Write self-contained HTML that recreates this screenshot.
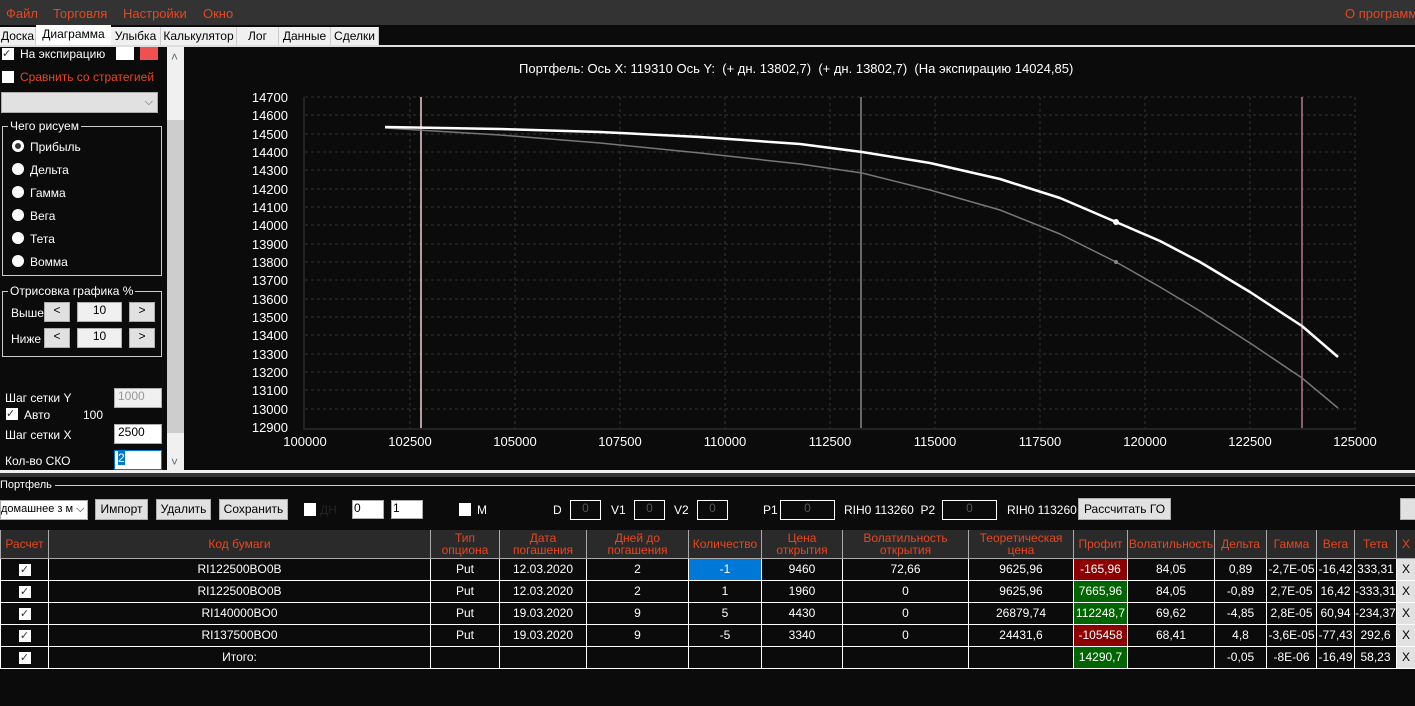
<!DOCTYPE html>
<html><head><meta charset="utf-8"><style>
*{box-sizing:border-box;margin:0;padding:0}
body{width:1415px;height:706px;background:#0b0b0b;font-family:"Liberation Sans",sans-serif;font-size:12px;color:#fff;position:relative;overflow:hidden}
.a{position:absolute}
.menu{left:0;top:0;width:1415px;height:25px;background:#333}
.menu span{position:absolute;top:6px;color:#e8461e;font-size:13px;white-space:nowrap}
.tab{position:absolute;top:27px;height:18px;background:#f0f0f0;color:#000;font-size:12px;padding-top:2px;text-align:center;border-right:1px solid #ccc}
.btn{position:absolute;background:#e1e1e1;border:1px solid #adadad;color:#000;text-align:center;font-size:12px;white-space:nowrap}
.inp{position:absolute;border:1px solid #fff;background:#0b0b0b;color:#555;text-align:center;font-size:12px}
.rad{position:absolute;width:12px;height:12px;border-radius:50%;background:#fff}
.lbl{position:absolute;font-size:12px;color:#fff;white-space:nowrap}
table{position:absolute;left:0;top:530px;border-collapse:collapse;table-layout:fixed;width:1415px}
td{border:1px solid #fff;height:22px;text-align:center;font-size:12px;white-space:nowrap;overflow:hidden}
tr.h td{background:#2a2a2a;color:#e8461e;height:28px;line-height:12px;border-color:#aaa;border-top:none}
.chk{display:inline-block;width:12px;height:12px;background:#fff;color:#333;font-size:11px;line-height:12px;vertical-align:middle}
.red{background:#8b0000}.grn{background:#006400}
</style></head><body>
<div class="a menu"><span style="left:6px">Файл</span><span style="left:53px">Торговля</span><span style="left:123px">Настройки</span><span style="left:203px">Окно</span><span style="left:1345px">О программ</span></div>
<div class="a" style="left:0;top:25px;width:1415px;height:21px;background:#0b0b0b"></div>
<div class="tab" style="left:0;width:36px">Доска</div>
<div class="tab" style="left:36px;width:75px;top:25px;height:21px;background:#fff;border:none">Диаграмма</div>
<div class="tab" style="left:111px;width:50px">Улыбка</div>
<div class="tab" style="left:161px;width:76px">Калькулятор</div>
<div class="tab" style="left:237px;width:42px">Лог</div>
<div class="tab" style="left:279px;width:52px">Данные</div>
<div class="tab" style="left:331px;width:48px">Сделки</div>
<div class="a" style="left:0;top:45px;width:1415px;height:2px;background:#ddd"></div>
<!-- left panel -->
<div class="a" style="left:2px;top:48px;width:12px;height:12px;background:#fff;color:#333;font-size:11px;line-height:12px">✓</div>
<div class="lbl" style="left:20px;top:47px">На экспирацию</div>
<div class="a" style="left:116px;top:47px;width:18px;height:13px;background:#fff"></div>
<div class="a" style="left:140px;top:47px;width:18px;height:13px;background:#f05050"></div>
<div class="a" style="left:2px;top:71px;width:12px;height:12px;background:#fff"></div>
<div class="lbl" style="left:20px;top:70px;color:#e8461e">Сравнить со стратегией</div>
<div class="a" style="left:1px;top:92px;width:157px;height:21px;background:#e1e1e1;border:1px solid #adadad;color:#555;text-align:right;padding-right:4px;font-size:11px;line-height:18px">⌵</div>
<div class="a" style="left:2px;top:126px;width:160px;height:150px;border:1px solid #ccc"></div>
<div class="lbl" style="left:8px;top:119px;background:#0b0b0b;padding:0 2px">Чего рисуем</div>
<div class="rad" style="left:12px;top:140px;border:3px solid #fff;background:#333"></div><div class="lbl" style="left:30px;top:140px">Прибыль</div>
<div class="rad" style="left:12px;top:163px"></div><div class="lbl" style="left:30px;top:163px">Дельта</div>
<div class="rad" style="left:12px;top:186px"></div><div class="lbl" style="left:30px;top:186px">Гамма</div>
<div class="rad" style="left:12px;top:209px"></div><div class="lbl" style="left:30px;top:209px">Вега</div>
<div class="rad" style="left:12px;top:232px"></div><div class="lbl" style="left:30px;top:232px">Тета</div>
<div class="rad" style="left:12px;top:255px"></div><div class="lbl" style="left:30px;top:255px">Вомма</div>
<div class="a" style="left:2px;top:291px;width:160px;height:66px;border:1px solid #ccc"></div>
<div class="lbl" style="left:8px;top:284px;background:#0b0b0b;padding:0 2px">Отрисовка графика %</div>
<div class="lbl" style="left:11px;top:306px">Выше</div>
<div class="btn" style="left:44px;top:302px;width:26px;height:20px">&lt;</div>
<div class="btn" style="left:77px;top:302px;width:45px;height:20px;background:#f0f0f0">10</div>
<div class="btn" style="left:129px;top:302px;width:26px;height:20px">&gt;</div>
<div class="lbl" style="left:11px;top:332px">Ниже</div>
<div class="btn" style="left:44px;top:328px;width:26px;height:20px">&lt;</div>
<div class="btn" style="left:77px;top:328px;width:45px;height:20px;background:#f0f0f0">10</div>
<div class="btn" style="left:129px;top:328px;width:26px;height:20px">&gt;</div>
<div class="lbl" style="left:5px;top:391px">Шаг сетки Y</div>
<div class="btn" style="left:114px;top:388px;width:48px;height:20px;background:#f0f0f0;color:#999;text-align:left;padding-left:3px">1000</div>
<div class="a" style="left:6px;top:408px;width:12px;height:12px;background:#fff;color:#333;font-size:11px;line-height:12px">✓</div>
<div class="lbl" style="left:24px;top:408px">Авто</div><div class="lbl" style="left:83px;top:408px">100</div>
<div class="lbl" style="left:5px;top:428px">Шаг сетки X</div>
<div class="btn" style="left:114px;top:424px;width:48px;height:20px;background:#fff;text-align:left;padding-left:3px">2500</div>
<div class="lbl" style="left:5px;top:454px">Кол-во СКО</div>
<div class="a" style="left:114px;top:450px;width:48px;height:20px;background:#fff;border:1px solid #0078d7;color:#fff;padding-left:3px"><span style="background:#0078d7">2</span></div>
<div class="a" style="left:167px;top:47px;width:17px;height:423px;background:#f0f0f0"></div>
<div class="a" style="left:167px;top:120px;width:17px;height:313px;background:#cdcdcd"></div>
<div class="lbl" style="left:171px;top:50px;color:#666">˄</div>
<div class="lbl" style="left:171px;top:455px;color:#666">˅</div>
<!-- chart -->
<div class="lbl" style="left:519px;top:61px;font-size:13px">Портфель: Ось X: 119310 Ось Y: &nbsp;(+ дн. 13802,7) &nbsp;(+ дн. 13802,7) &nbsp;(На экспирацию 14024,85)</div>
<svg class="a" style="left:0;top:0" width="1415" height="470">
<g stroke="#333" stroke-dasharray="3,3" stroke-width="1">
<line x1="305" y1="97" x2="1355" y2="97"/><line x1="305" y1="115" x2="1355" y2="115"/><line x1="305" y1="134" x2="1355" y2="134"/><line x1="305" y1="152" x2="1355" y2="152"/><line x1="305" y1="170" x2="1355" y2="170"/><line x1="305" y1="189" x2="1355" y2="189"/><line x1="305" y1="207" x2="1355" y2="207"/><line x1="305" y1="225" x2="1355" y2="225"/><line x1="305" y1="244" x2="1355" y2="244"/><line x1="305" y1="262" x2="1355" y2="262"/><line x1="305" y1="280" x2="1355" y2="280"/><line x1="305" y1="299" x2="1355" y2="299"/><line x1="305" y1="317" x2="1355" y2="317"/><line x1="305" y1="335" x2="1355" y2="335"/><line x1="305" y1="354" x2="1355" y2="354"/><line x1="305" y1="372" x2="1355" y2="372"/><line x1="305" y1="390" x2="1355" y2="390"/><line x1="305" y1="409" x2="1355" y2="409"/>
<line x1="410" y1="97" x2="410" y2="428"/><line x1="515" y1="97" x2="515" y2="428"/><line x1="620" y1="97" x2="620" y2="428"/><line x1="725" y1="97" x2="725" y2="428"/><line x1="830" y1="97" x2="830" y2="428"/><line x1="935" y1="97" x2="935" y2="428"/><line x1="1040" y1="97" x2="1040" y2="428"/><line x1="1145" y1="97" x2="1145" y2="428"/><line x1="1250" y1="97" x2="1250" y2="428"/><line x1="1355" y1="97" x2="1355" y2="428"/>
</g>
<line x1="304" y1="97" x2="304" y2="429" stroke="#222" stroke-width="2"/>
<line x1="303" y1="429" x2="1356" y2="429" stroke="#222" stroke-width="2"/>
<line x1="421" y1="97" x2="421" y2="428" stroke="#f0d0d0" stroke-width="1.5"/>
<line x1="861" y1="97" x2="861" y2="428" stroke="#888" stroke-width="1.5"/>
<line x1="1302" y1="97" x2="1302" y2="428" stroke="#b08088" stroke-width="1.5"/>
<polyline points="385,128 500,135 600,143 700,153 800,164 862,173 930,190 1000,210 1060,234 1116,262 1160,287 1200,311 1250,343 1302,378 1338,408" fill="none" stroke="#777" stroke-width="1.5" stroke-linejoin="round"/>
<polyline points="385,127 500,129 600,132 700,137 800,144 862,152 930,163 1000,179 1060,198 1116,222 1160,241 1200,262 1250,292 1302,326 1338,357" fill="none" stroke="#fff" stroke-width="2.5" stroke-linejoin="round"/>
<circle cx="1116" cy="222" r="3" fill="#fff"/><circle cx="1116" cy="262" r="2" fill="#888"/>
<g fill="#fff" font-size="13" font-family="Liberation Sans" text-anchor="end">
<text x="288" y="102">14700</text><text x="288" y="120">14600</text><text x="288" y="139">14500</text><text x="288" y="157">14400</text><text x="288" y="175">14300</text><text x="288" y="194">14200</text><text x="288" y="212">14100</text><text x="288" y="230">14000</text><text x="288" y="249">13900</text><text x="288" y="267">13800</text><text x="288" y="285">13700</text><text x="288" y="304">13600</text><text x="288" y="322">13500</text><text x="288" y="340">13400</text><text x="288" y="359">13300</text><text x="288" y="377">13200</text><text x="288" y="395">13100</text><text x="288" y="414">13000</text><text x="288" y="432">12900</text>
</g>
<g fill="#fff" font-size="13" font-family="Liberation Sans" text-anchor="middle">
<text x="305" y="446">100000</text><text x="515" y="446">105000</text><text x="620" y="446">107500</text><text x="725" y="446">110000</text><text x="830" y="446">112500</text><text x="935" y="446">115000</text><text x="1040" y="446">117500</text><text x="1145" y="446">120000</text><text x="1250" y="446">122500</text><text x="1355" y="446">125000</text><text x="410" y="446">102500</text>
</g>
</svg>
<div class="a" style="left:0;top:470px;width:1415px;height:3px;background:#eee"></div>
<div class="a" style="left:0;top:473px;width:1415px;height:4px;background:#333"></div>
<!-- portfolio -->
<div class="a" style="left:0;top:485px;width:1415px;height:1px;background:#ccc"></div>
<div class="lbl" style="left:0;top:479px;background:#0b0b0b;padding-right:3px;font-size:11px">Портфель</div>
<div class="btn" style="left:0;top:500px;width:88px;height:20px;background:#fff;text-align:left;font-size:11px;line-height:17px;overflow:hidden">домашнее з м ⌵</div>
<div class="btn" style="left:95px;top:499px;width:53px;height:21px;line-height:19px">Импорт</div>
<div class="btn" style="left:156px;top:499px;width:55px;height:21px;line-height:19px">Удалить</div>
<div class="btn" style="left:219px;top:499px;width:69px;height:21px;line-height:19px">Сохранить</div>
<div class="a" style="left:304px;top:503px;width:12px;height:13px;background:#fff"></div>
<div class="lbl" style="left:320px;top:503px;color:#222">ДН</div>
<div class="btn" style="left:352px;top:500px;width:32px;height:19px;background:#fff;text-align:left;padding-left:1px">0</div>
<div class="btn" style="left:391px;top:500px;width:32px;height:19px;background:#fff;text-align:left;padding-left:1px">1</div>
<div class="a" style="left:459px;top:503px;width:12px;height:13px;background:#fff"></div>
<div class="lbl" style="left:477px;top:503px">M</div>
<div class="lbl" style="left:553px;top:503px">D</div><div class="inp" style="left:570px;top:500px;width:31px;height:20px">0</div>
<div class="lbl" style="left:611px;top:503px">V1</div><div class="inp" style="left:634px;top:500px;width:31px;height:20px">0</div>
<div class="lbl" style="left:674px;top:503px">V2</div><div class="inp" style="left:697px;top:500px;width:31px;height:20px">0</div>
<div class="lbl" style="left:763px;top:503px">P1</div><div class="inp" style="left:780px;top:500px;width:55px;height:20px">0</div>
<div class="lbl" style="left:844px;top:503px">RIH0 113260 &nbsp;P2</div><div class="inp" style="left:942px;top:500px;width:55px;height:20px">0</div>
<div class="lbl" style="left:1007px;top:503px">RIH0 113260</div>
<div class="btn" style="left:1078px;top:498px;width:93px;height:22px;line-height:20px">Рассчитать ГО</div>
<div class="btn" style="left:1400px;top:498px;width:20px;height:22px"></div>
<table>
<colgroup><col style="width:48px"><col style="width:382px"><col style="width:69px"><col style="width:87px"><col style="width:102px"><col style="width:73px"><col style="width:81px"><col style="width:126px"><col style="width:105px"><col style="width:54px"><col style="width:87px"><col style="width:52px"><col style="width:50px"><col style="width:38px"><col style="width:42px"><col style="width:19px"></colgroup>
<tr class="h"><td>Расчет</td><td>Код бумаги</td><td>Тип<br>опциона</td><td>Дата<br>погашения</td><td>Дней до<br>погашения</td><td>Количество</td><td>Цена<br>открытия</td><td>Волатильность<br>открытия</td><td>Теоретическая<br>цена</td><td>Профит</td><td>Волатильность</td><td>Дельта</td><td>Гамма</td><td>Вега</td><td>Тета</td><td>X</td></tr>
<tr><td><span class="chk">✓</span></td><td>RI122500BO0B</td><td>Put</td><td>12.03.2020</td><td>2</td><td style="background:#0078d7">-1</td><td>9460</td><td>72,66</td><td>9625,96</td><td class="red">-165,96</td><td>84,05</td><td>0,89</td><td>-2,7E-05</td><td>-16,42</td><td>333,31</td><td style="background:#e1e1e1;color:#000">X</td></tr>
<tr><td><span class="chk">✓</span></td><td>RI122500BO0B</td><td>Put</td><td>12.03.2020</td><td>2</td><td>1</td><td>1960</td><td>0</td><td>9625,96</td><td class="grn">7665,96</td><td>84,05</td><td>-0,89</td><td>2,7E-05</td><td>16,42</td><td>-333,31</td><td style="background:#e1e1e1;color:#000">X</td></tr>
<tr><td><span class="chk">✓</span></td><td>RI140000BO0</td><td>Put</td><td>19.03.2020</td><td>9</td><td>5</td><td>4430</td><td>0</td><td>26879,74</td><td class="grn">112248,7</td><td>69,62</td><td>-4,85</td><td>2,8E-05</td><td>60,94</td><td>-234,37</td><td style="background:#e1e1e1;color:#000">X</td></tr>
<tr><td><span class="chk">✓</span></td><td>RI137500BO0</td><td>Put</td><td>19.03.2020</td><td>9</td><td>-5</td><td>3340</td><td>0</td><td>24431,6</td><td class="red">-105458</td><td>68,41</td><td>4,8</td><td>-3,6E-05</td><td>-77,43</td><td>292,6</td><td style="background:#e1e1e1;color:#000">X</td></tr>
<tr><td><span class="chk">✓</span></td><td>Итого:</td><td></td><td></td><td></td><td></td><td></td><td></td><td></td><td class="grn">14290,7</td><td></td><td>-0,05</td><td>-8E-06</td><td>-16,49</td><td>58,23</td><td style="background:#e1e1e1;color:#000">X</td></tr>
</table>
</body></html>
